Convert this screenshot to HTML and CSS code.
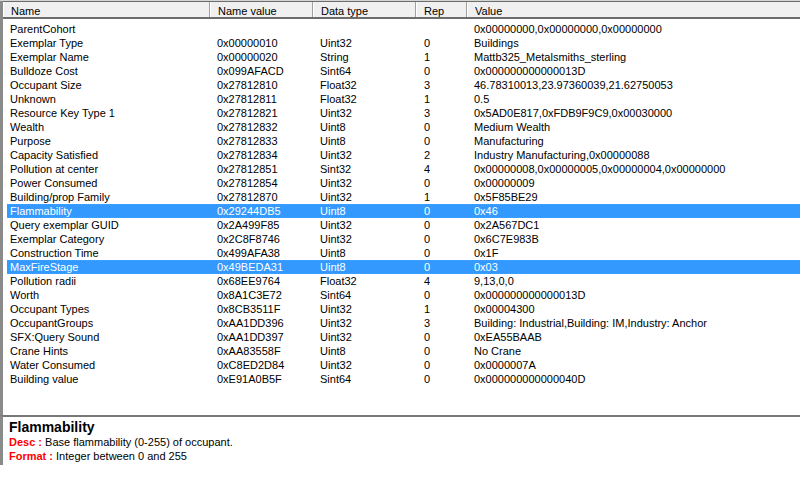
FILE: index.html
```html
<!DOCTYPE html>
<html lang="en">
<head>
    <meta charset="UTF-8">
    <title>Exemplar properties</title>
    <link rel="stylesheet" href="styles.css">
</head>
<body>
    <div class="topline"></div>
    <div class="view">
        <div class="header">
            <div class="hcell">Name</div>
            <div class="hcell">Name value</div>
            <div class="hcell">Data type</div>
            <div class="hcell">Rep</div>
            <div class="hcell last">Value</div>
        </div>
        <div class="rows">
            <div class="row"><span>ParentCohort</span><span></span><span></span><span></span><span>0x00000000,0x00000000,0x00000000</span></div>
            <div class="row"><span>Exemplar Type</span><span>0x00000010</span><span>Uint32</span><span>0</span><span>Buildings</span></div>
            <div class="row"><span>Exemplar Name</span><span>0x00000020</span><span>String</span><span>1</span><span>Mattb325_Metalsmiths_sterling</span></div>
            <div class="row"><span>Bulldoze Cost</span><span>0x099AFACD</span><span>Sint64</span><span>0</span><span>0x000000000000013D</span></div>
            <div class="row"><span>Occupant Size</span><span>0x27812810</span><span>Float32</span><span>3</span><span>46.78310013,23.97360039,21.62750053</span></div>
            <div class="row"><span>Unknown</span><span>0x27812811</span><span>Float32</span><span>1</span><span>0.5</span></div>
            <div class="row"><span>Resource Key Type 1</span><span>0x27812821</span><span>Uint32</span><span>3</span><span>0x5AD0E817,0xFDB9F9C9,0x00030000</span></div>
            <div class="row"><span>Wealth</span><span>0x27812832</span><span>Uint8</span><span>0</span><span>Medium Wealth</span></div>
            <div class="row"><span>Purpose</span><span>0x27812833</span><span>Uint8</span><span>0</span><span>Manufacturing</span></div>
            <div class="row"><span>Capacity Satisfied</span><span>0x27812834</span><span>Uint32</span><span>2</span><span>Industry Manufacturing,0x00000088</span></div>
            <div class="row"><span>Pollution at center</span><span>0x27812851</span><span>Sint32</span><span>4</span><span>0x00000008,0x00000005,0x00000004,0x00000000</span></div>
            <div class="row"><span>Power Consumed</span><span>0x27812854</span><span>Uint32</span><span>0</span><span>0x00000009</span></div>
            <div class="row"><span>Building/prop Family</span><span>0x27812870</span><span>Uint32</span><span>1</span><span>0x5F85BE29</span></div>
            <div class="row selected"><span>Flammability</span><span>0x29244DB5</span><span>Uint8</span><span>0</span><span>0x46</span></div>
            <div class="row"><span>Query exemplar GUID</span><span>0x2A499F85</span><span>Uint32</span><span>0</span><span>0x2A567DC1</span></div>
            <div class="row"><span>Exemplar Category</span><span>0x2C8F8746</span><span>Uint32</span><span>0</span><span>0x6C7E983B</span></div>
            <div class="row"><span>Construction Time</span><span>0x499AFA38</span><span>Uint8</span><span>0</span><span>0x1F</span></div>
            <div class="row selected"><span>MaxFireStage</span><span>0x49BEDA31</span><span>Uint8</span><span>0</span><span>0x03</span></div>
            <div class="row"><span>Pollution radii</span><span>0x68EE9764</span><span>Float32</span><span>4</span><span>9,13,0,0</span></div>
            <div class="row"><span>Worth</span><span>0x8A1C3E72</span><span>Sint64</span><span>0</span><span>0x000000000000013D</span></div>
            <div class="row"><span>Occupant Types</span><span>0x8CB3511F</span><span>Uint32</span><span>1</span><span>0x00004300</span></div>
            <div class="row"><span>OccupantGroups</span><span>0xAA1DD396</span><span>Uint32</span><span>3</span><span>Building: Industrial,Building: IM,Industry: Anchor</span></div>
            <div class="row"><span>SFX:Query Sound</span><span>0xAA1DD397</span><span>Uint32</span><span>0</span><span>0xEA55BAAB</span></div>
            <div class="row"><span>Crane Hints</span><span>0xAA83558F</span><span>Uint8</span><span>0</span><span>No Crane</span></div>
            <div class="row"><span>Water Consumed</span><span>0xC8ED2D84</span><span>Uint32</span><span>0</span><span>0x0000007A</span></div>
            <div class="row"><span>Building value</span><span>0xE91A0B5F</span><span>Sint64</span><span>0</span><span>0x000000000000040D</span></div>
        </div>
    </div>

    <div class="details">
        <div class="title">Flammability</div>
        <div class="line"><span class="label">Desc :</span> Base flammability (0-255) of occupant.</div>
        <div class="line"><span class="label">Format :</span> Integer between 0 and 255</div>
    </div>
</body>
</html>
```

FILE: styles.css
```css
body {
    font-family: "Liberation Sans", Arial, sans-serif;
    font-size: 11px;
    color: #000;
    background-color: #fff;
    margin: 0;
    padding: 0;
}
.topline {
    height: 1px;
    background-color: #d4d4d4;
}
.view {
    height: 414px;
    border-left: 3px solid #8a8a8a;
    overflow: hidden;
}
.header {
    display: grid;
    grid-template-columns: 207px 103px 103px 51px 1fr;
    height: 18px;
    box-sizing: border-box;
    border-top: 1px solid #6d6d6d;
    border-bottom: 2px solid #6d6d6d;
    background-color: #f0f0f0;
}
.hcell {
    border-left: 1px solid #fff;
    border-right: 1px solid #a0a0a0;
    padding: 3px 0 0 7px;
    line-height: 12px;
    white-space: nowrap;
    overflow: hidden;
}
.hcell.last {
    border-right: none;
}
.rows {
    padding-top: 3px;
}
.row {
    display: grid;
    grid-template-columns: 203px 103px 103px 51px 1fr;
    margin-left: 4px;
    height: 14px;
    box-sizing: border-box;
    border-top: 1px solid transparent;
    border-bottom: 1px solid transparent;
    line-height: 12px;
}
.row span {
    padding-left: 7px;
    white-space: nowrap;
    overflow: hidden;
}
.row span:first-child {
    padding-left: 3px;
}
.row span:nth-child(4) {
    padding-left: 8px;
}
.row.selected {
    background-color: #3399ff;
    color: #fff;
    border-top: 1px dotted #d98030;
    border-bottom: 1px dotted #d98030;
}
.details {
    height: 50px;
    box-sizing: border-box;
    border-top: 2px solid #787878;
    border-left: 3px solid #8a8a8a;
    padding: 2px 0 0 6px;
}
.title {
    font-size: 14px;
    font-weight: bold;
    line-height: 16px;
}
.line {
    line-height: 14px;
}
.label {
    color: #ff0000;
    font-weight: bold;
}
```
